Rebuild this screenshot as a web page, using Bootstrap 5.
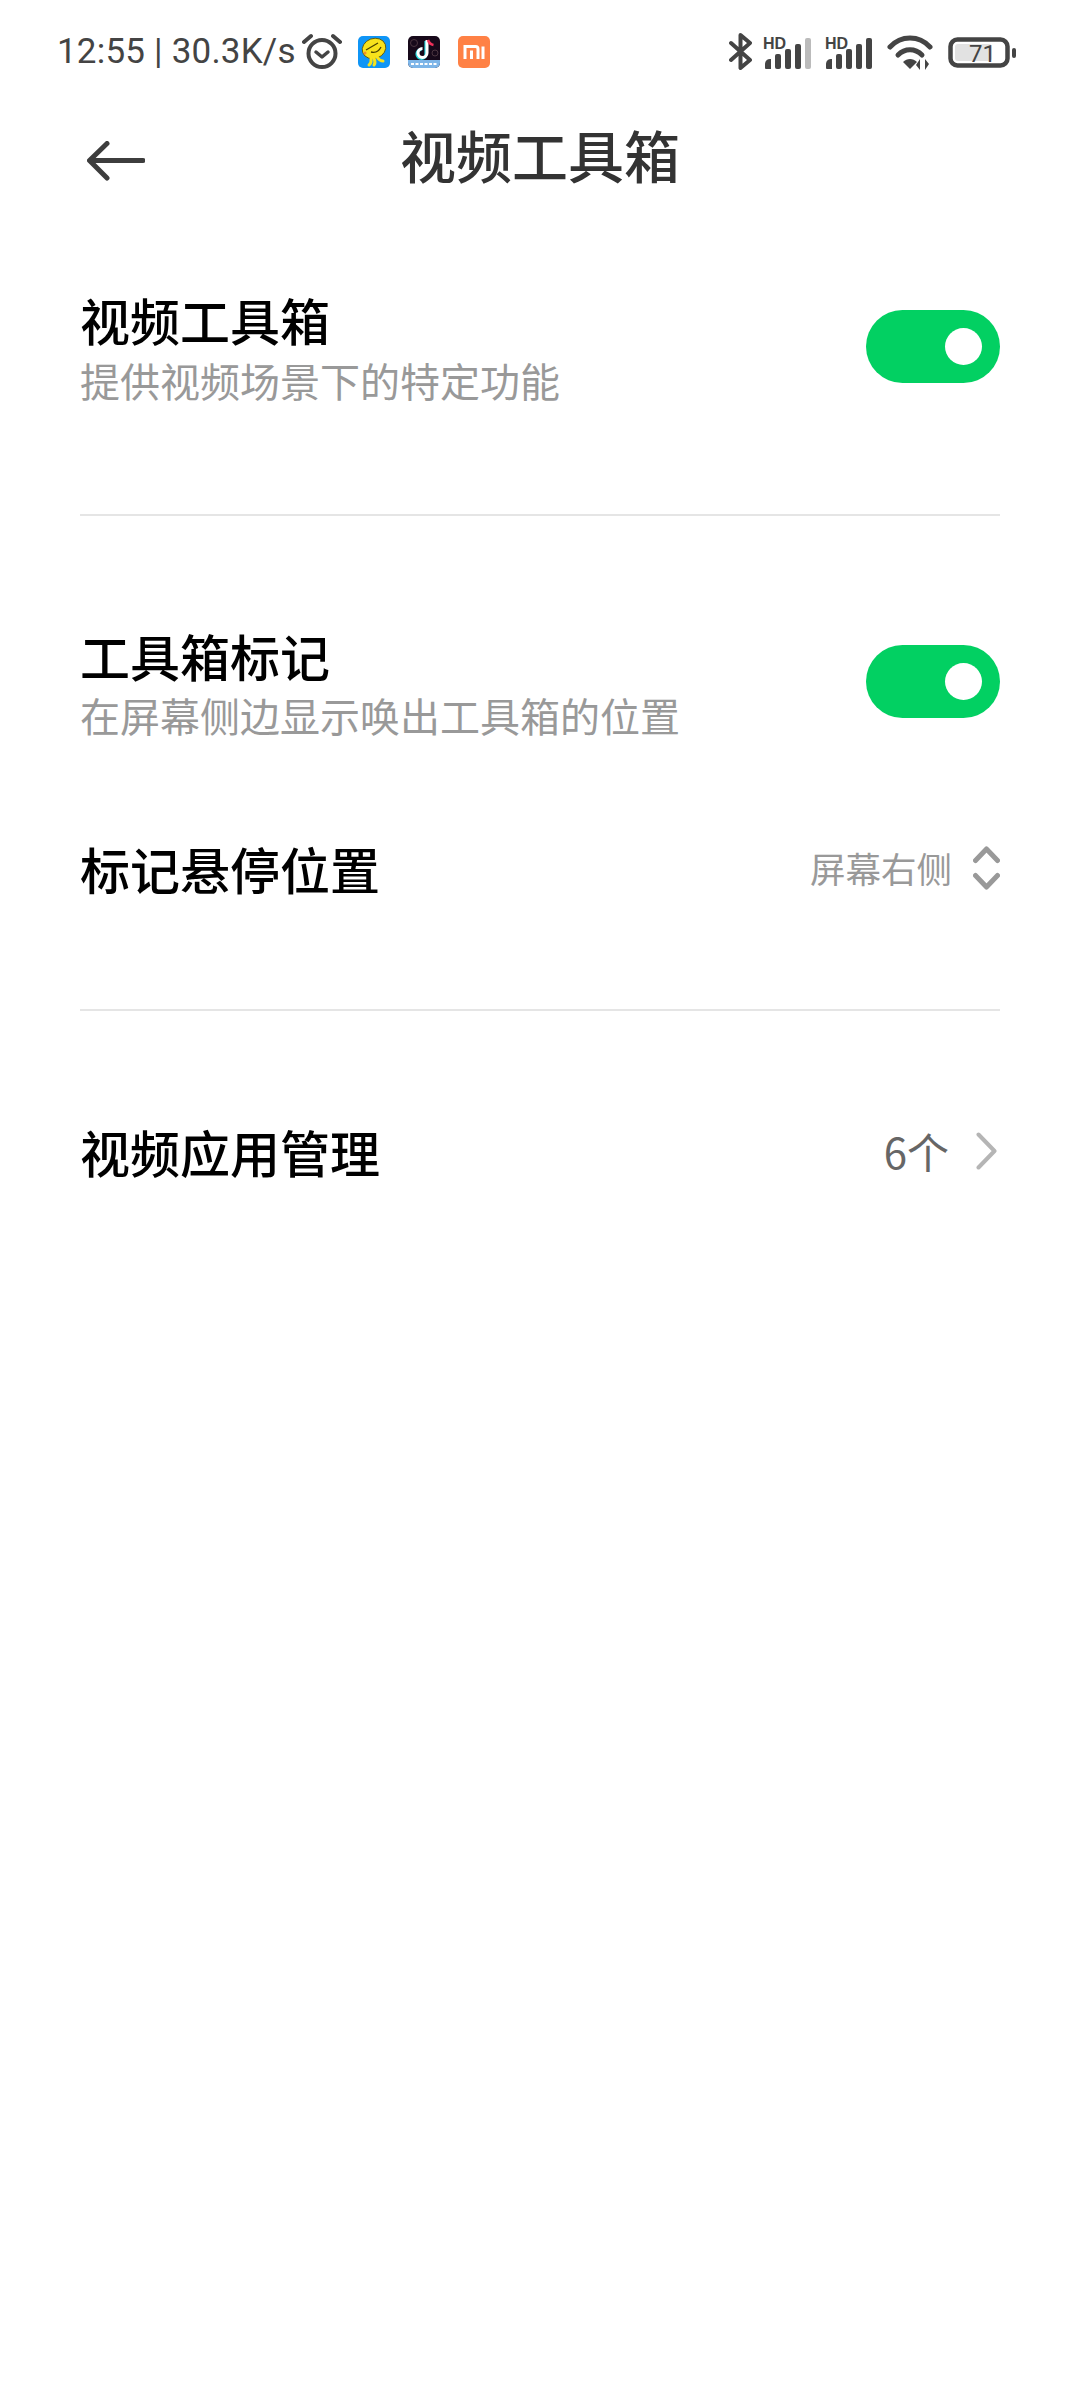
<!DOCTYPE html>
<html lang="zh-CN">
<head>
<meta charset="utf-8">
<title>视频工具箱</title>
<link href="https://cdn.jsdelivr.net/npm/bootstrap@5.3.0/dist/css/bootstrap.min.css" rel="stylesheet">
<style>
body{background:#fff;font-family:"Noto Sans CJK SC","Noto Sans",sans-serif;width:1080px;height:2400px;overflow:hidden}
.stat-bar{height:104px;padding:33px 63px 0 57px;align-items:flex-start}
.stat-text{font-family:Roboto,"Noto Sans",sans-serif;font-size:35px;line-height:38px;color:#444;letter-spacing:.2px;width:245px;white-space:nowrap}
.stat-bar svg{display:block;flex:none}
.tool-bar{height:106px;padding:0 80px 6px;position:relative}
.page-title{font-size:56px;line-height:70px;font-weight:500;color:#333;text-align:center;margin:0;width:100%}
.back-btn{position:absolute;left:87px;top:37px;display:block}
.set-list{padding:0 80px}
.sect-a{padding-top:79px;height:306px;border-bottom:2px solid #e5e5e5}
.sect-b{padding-top:109px;height:495px;border-bottom:2px solid #e5e5e5}
.sect-c{padding-top:110px}
.item-title{font-size:50px;line-height:60px;font-weight:500;color:#000;margin:0}
.item-sub{font-size:40px;line-height:60px;color:#999;margin:0}
.sect-a .item-sub{line-height:62px}
.form-switch.mi-switch{padding:0;margin:20px 0 0;min-height:0;line-height:0}
.sect-a .form-switch.mi-switch{margin-top:21px}
.form-switch.mi-switch .form-check-input{float:none;margin:0;width:134px;height:73px;border:0;border-radius:37px;background-color:#02d062;background-position:right center;background-repeat:no-repeat;background-size:auto 100%;background-image:url("data:image/svg+xml,%3csvg xmlns='http://www.w3.org/2000/svg' viewBox='0 0 73 73'%3e%3ccircle cx='36.5' cy='36.5' r='18.5' fill='%23fff'/%3e%3c/svg%3e");box-shadow:none}
.item-row{margin-top:93px}
.val-grey{font-size:35.5px;line-height:60px;color:#999}
.val-dark{font-family:"Noto Sans CJK SC",sans-serif;font-size:42px;line-height:60px;color:#666}
</style>
</head>
<body>
<div class="stat-bar d-flex">
  <span class="stat-text">12:55 | 30.3K/s</span>
  <svg width="40" height="36" viewBox="0 0 40 36"><g fill="none" stroke="#444" stroke-linecap="round"><circle cx="20" cy="20.500" r="13.500" stroke-width="4"/><path d="M14 19l6 5 6-5" stroke-width="3.500" stroke-linejoin="round"/><path d="M2 9 9 3M38 9 31 3" stroke-width="4"/></g></svg>
  <svg class="ms-3" width="32" height="32" viewBox="0 0 32 32" style="margin-top:3px"><rect width="32" height="32" rx="5" fill="#0f95f6"/><ellipse cx="16" cy="12.500" rx="12" ry="10" fill="#f7e21c" stroke="#5b5000" stroke-width=".8" transform="rotate(-20 16 12.500)"/><path d="M8 14l12-7M13 16c4 1 8-1 10-5" stroke="#4a4200" stroke-width="1.300" fill="none"/><path d="M13 21c0 4 1 6-2 8M16 22c1 3 2 5 0 7M19 21c2 3 4 4 6 4" stroke="#f7e21c" stroke-width="3" fill="none" stroke-linecap="round"/><circle cx="7" cy="17" r="1.500" fill="#f0902a"/></svg>
  <svg width="32" height="32" viewBox="0 0 32 32" style="margin:3px 0 0 18px"><rect width="32" height="32" rx="5" fill="#17091a"/><path d="M0 24h32v3a5 5 0 0 1-5 5H5a5 5 0 0 1-5-5z" fill="#7db5e8"/><path d="M3 28h26" stroke="#fff" stroke-width="2" stroke-dasharray="3 1.500"/><path d="M18 5v13a4.500 4.500 0 1 1-4.500-4.500" fill="none" stroke="#25d8e0" stroke-width="3.200"/><path d="M19 4v13a4.500 4.500 0 1 1-4.500-4.500" fill="none" stroke="#fff" stroke-width="3"/><path d="M20 4c1 3 3 4.500 5.500 5" fill="none" stroke="#f0305a" stroke-width="2.500"/><circle cx="6" cy="7" r="3.500" fill="none" stroke="#4a3540" stroke-width="1"/><circle cx="27" cy="17" r="3" fill="none" stroke="#4a3540" stroke-width="1"/></svg>
  <svg width="32" height="32" viewBox="0 0 32 32" style="margin:3px 0 0 18px"><rect width="32" height="32" rx="5" fill="#ff8145"/><path d="M7 23V10.500h10.500a2.500 2.500 0 0 1 2.500 2.500V23M13.500 23V14.500M25 10.500V23" fill="none" stroke="#fff" stroke-width="3"/></svg>
  <svg class="ms-auto" width="23" height="37" viewBox="0 0 23 37"><path d="M2 10l19 17-9.500 8V2L21 10 2 27" fill="none" stroke="#444" stroke-width="4" stroke-linejoin="round" stroke-linecap="round"/></svg>
  <svg width="52" height="34" viewBox="0 0 52 34" style="margin:3px 0 0 11px"><text x="0" y="13" font-family="Liberation Sans" font-weight="700" font-size="16" fill="#444">HD</text><g fill="#444"><path d="M2 32v-4a5 5 0 0 1 6-5v10H3a1 1 0 0 1-1-1z"/><rect x="12" y="18" width="6" height="15" rx="2"/><rect x="22" y="13" width="6" height="20" rx="2"/><rect x="32" y="8" width="6" height="25" rx="2"/></g><rect x="42" y="2" width="6" height="31" rx="2" fill="#bbb"/></svg>
  <svg width="48" height="34" viewBox="0 0 48 34" style="margin:3px 0 0 10px"><text x="0" y="13" font-family="Liberation Sans" font-weight="700" font-size="16" fill="#444">HD</text><g fill="#444"><path d="M1 32v-4a5 5 0 0 1 6-5v10H2a1 1 0 0 1-1-1z"/><rect x="11" y="18" width="6" height="15" rx="2"/><rect x="21" y="13" width="6" height="20" rx="2"/><rect x="31" y="8" width="6" height="25" rx="2"/><rect x="41" y="2" width="6" height="31" rx="2"/></g></svg>
  <svg width="46" height="36" viewBox="0 0 46 36" style="margin:2px 0 0 14px"><g fill="none" stroke="#444" stroke-width="5" stroke-linecap="round"><path d="M3 12C14 0 32 0 43 12"/><path d="M11 20c7-7 17-7 24 0"/></g><path d="M16 27c4-4 10-4 14 0l-7 7z" fill="#444"/><path d="M33 35V24l-4 6zM38 24v11l4-6z" fill="#444"/></svg>
  <svg width="69" height="32" viewBox="0 0 69 32" style="margin:4px 0 0 15px"><rect x="2.500" y="2.500" width="57" height="26" rx="7" fill="none" stroke="#444" stroke-width="4.500"/><rect x="7" y="7" width="37" height="17" rx="3" fill="#e2e2e2"/><text x="21" y="25" font-family="Roboto" font-size="24" fill="#444">71</text><rect x="64" y="11" width="4" height="10" rx="2" fill="#444"/></svg>
</div>
<div class="tool-bar d-flex align-items-center">
  <svg class="back-btn" width="58" height="40" viewBox="0 0 58 40"><path d="M56 19.500H3M20 2.500 2.500 19.500 20 37" fill="none" stroke="#3d3d3d" stroke-width="5" stroke-linecap="round" stroke-linejoin="round"/></svg>
  <h1 class="page-title">视频工具箱</h1>
</div>
<div class="set-list">
  <section class="sect-a d-flex justify-content-between align-items-start">
    <div><p class="item-title">视频工具箱</p><p class="item-sub">提供视频场景下的特定功能</p></div>
    <div class="form-check form-switch mi-switch"><input class="form-check-input" type="checkbox" role="switch" checked aria-label="视频工具箱"></div>
  </section>
  <section class="sect-b">
    <div class="d-flex justify-content-between align-items-start">
      <div><p class="item-title">工具箱标记</p><p class="item-sub">在屏幕侧边显示唤出工具箱的位置</p></div>
      <div class="form-check form-switch mi-switch"><input class="form-check-input" type="checkbox" role="switch" checked aria-label="工具箱标记"></div>
    </div>
    <div class="item-row d-flex justify-content-between align-items-center">
      <p class="item-title">标记悬停位置</p>
      <div class="d-flex align-items-center"><span class="val-grey">屏幕右侧</span>
        <svg width="27" height="44" viewBox="0 0 27 44" style="margin-left:21px"><path d="M2.500 14.500 13.500 3l11 11.500M2.500 29.500 13.500 41l11-11.500" fill="none" stroke="#999" stroke-width="5" stroke-linecap="round" stroke-linejoin="round"/></svg></div>
    </div>
  </section>
  <section class="sect-c d-flex justify-content-between align-items-center">
    <p class="item-title">视频应用管理</p>
    <div class="d-flex align-items-center"><span class="val-dark">6个</span>
      <svg width="21" height="38" viewBox="0 0 21 38" style="margin:0 3px 0 27px"><path d="M2.500 2.500 18.500 19 2.500 35.500" fill="none" stroke="#b5b5b5" stroke-width="4" stroke-linecap="round" stroke-linejoin="round"/></svg></div>
  </section>
</div>
<script src="https://cdn.jsdelivr.net/npm/bootstrap@5.3.0/dist/js/bootstrap.bundle.min.js"></script>
</body>
</html>
